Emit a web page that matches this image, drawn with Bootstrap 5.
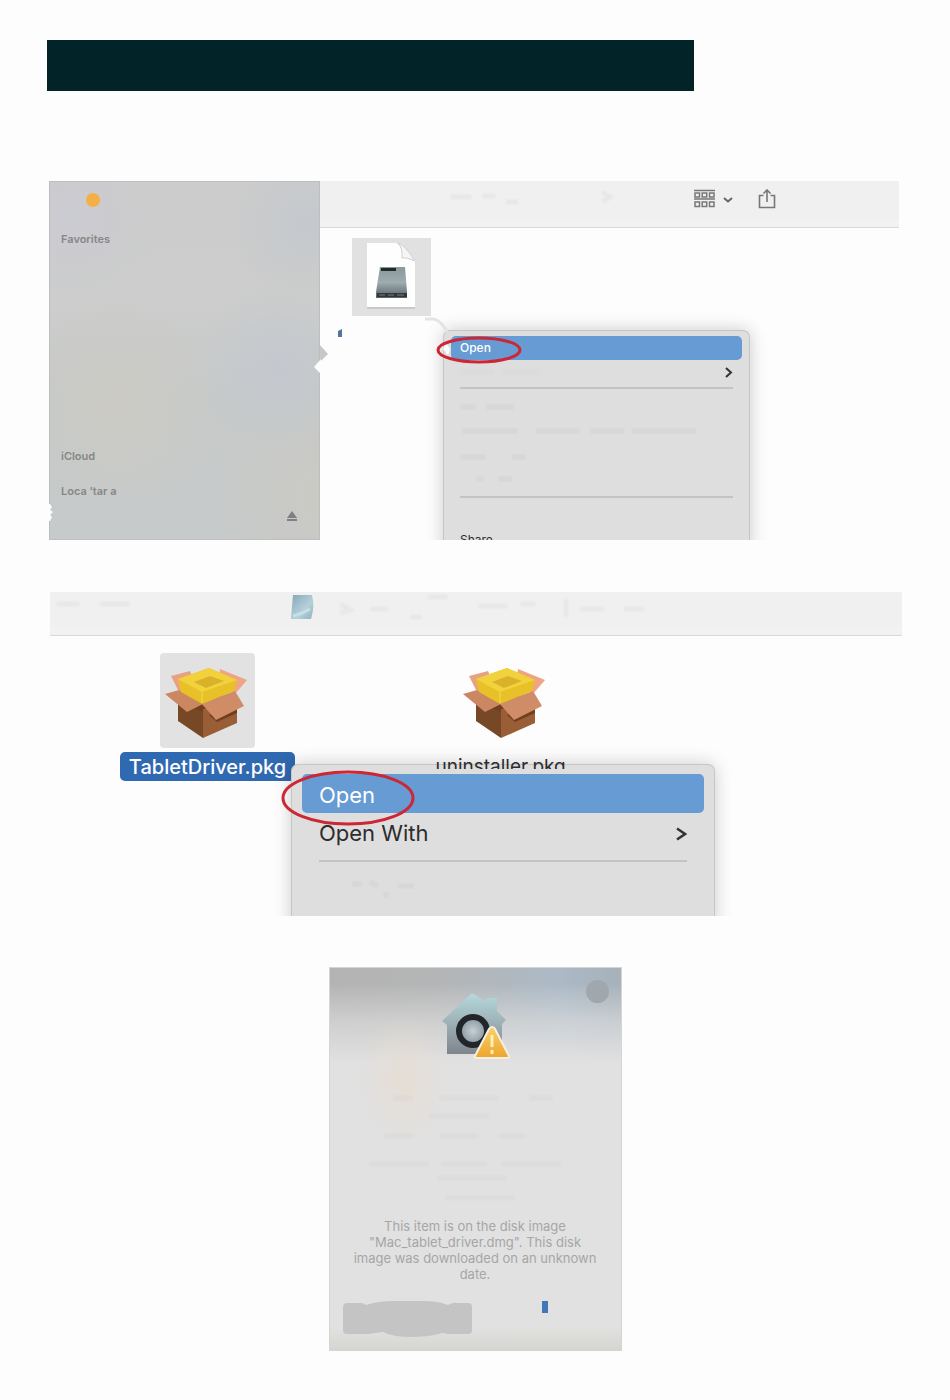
<!DOCTYPE html>
<html lang="en">
<head>
<meta charset="utf-8">
<meta name="viewport" content="width=device-width, initial-scale=1">
<title>Tablet driver installation on macOS</title>
<link href="https://cdn.jsdelivr.net/npm/bootstrap@5.3.0/dist/css/bootstrap.min.css" rel="stylesheet">
<style>
body{background:#fdfdfd;font-family:Inter,"Liberation Sans",sans-serif;color:#2c2c2c}
.page{padding:40px 47px 48px}
.banner{background:#022428;width:647px;max-width:100%;height:51px;margin-bottom:90px}
button{border:0;background:none;padding:0;color:inherit;text-align:left;display:block}
.win{position:relative;overflow:hidden}
/* finder window */
.finder{height:359px;margin:0 4px 52px 2px}
.side{width:271px;padding:11px;position:relative;font-size:11px;line-height:16px;color:#858787;border:1px solid #bdbfbf;
background:radial-gradient(circle at 25% 62%,#cccbc5 0,#cccbc500 34%),radial-gradient(circle at 85% 52%,#c4c8ce 0,#c4c8ce00 28%),radial-gradient(circle at 100% 88%,#cac9c4 0,#cac9c400 24%),radial-gradient(circle at 8% 10%,#cbcbd2 0,#cbcbd200 20%),radial-gradient(circle at 95% 12%,#c4c8cd 0,#c4c8cd00 18%),linear-gradient(#cccccc,#cccdcc 35%,#c6c9c8 60%,#c7caca)}
.side h2{font-size:11px;line-height:16px;font-weight:600;margin:0}
.dot{width:14px;height:14px;border-radius:50%;background:#f5b045;margin-left:25px}
.side .fav{height:217px;margin-top:24px}.side .cloud{height:35px}
.tear{position:absolute;z-index:2}
.bar{background:#f0f0f0;border-bottom:1px solid #d9d9d9;box-shadow:inset 0 -8px 0 #f2f2f2}
.finder .bar{height:47px;padding:8px 123px 0 0}
.ghost{stroke:#000;opacity:.03;fill:none;stroke-width:5;filter:blur(1px)}
.tile{background:#e1e1e1;width:79px;height:78px;margin:10px 0 0 32px}
.menu-pop{position:absolute;background:#dedede;border:1px solid #c6c6c6;border-bottom:0;border-radius:7px 7px 0 0;box-shadow:0 0 18px #0003}
.menu-pop hr{margin:0;border-top:2px solid #c3c3c3;opacity:1}
.menu1{left:394px;top:149px;width:307px;height:230px;padding:5px 7px;font-size:12px;line-height:24px}
.menu1 hr{margin:3px 9px 0}
.menu1 button,.menu2 button{width:100%}
.menu1 button{padding:0 9px;height:24px}
.on{background:#669bd3;color:#fff;border-radius:5px}
.on.thin{font-weight:500}
.void1{height:104px;padding:10px 9px}
.menu1 .share{padding-top:27px;height:56px}
.ring{fill:none;stroke:#cd2634}
/* package window */
.pack{height:324px;margin:0 1px 51px 3px}
.pack .bar{height:44px}
.pkgs{padding:17px 0 0 70px}
.pkgs figure{margin:0;width:175px;font-size:20px;line-height:29px}
.pkgs figure+figure{margin-left:117px;padding-left:46px;width:260px}
.pic{width:95px;height:95px;border-radius:4px}
.chosen{background:#2f69b1;color:#fff;border-radius:5px;margin-top:4px;text-align:center;font-weight:500;padding-top:1px;line-height:28px}
.halfname{position:absolute;left:380px;top:161px;height:16px;overflow:hidden;z-index:2;font-size:19px;line-height:27px}
.menu2{left:241px;top:172px;width:424px;height:170px;padding:9px 10px;font-size:22px;line-height:39px}
.menu2 button{padding:2px 17px 0;line-height:37px}
.menu2 .on{padding-top:3px;line-height:36px}
.menu2 hr{margin:8px 17px 0}
/* gatekeeper alert */
.alertbox{width:293px;height:384px;margin:0 auto;position:relative;padding:24px 13px 0;border:1px solid #d5d5d5;
background:radial-gradient(ellipse 45px 65px at 25% 29%,#e8dccf88 20%,#e8dccf00),linear-gradient(#e1e1e100 4%,#e1e1e199 14%,#e1e1e1 25%,#e1e1e1 94%,#d5d5d0 100%),linear-gradient(90deg,#b3b3b3,#b4b5b6 38%,#acbac6 78%,#a6b1ba)}
.closer{position:absolute;right:12px;top:12px;width:23px;height:23px;border-radius:50%;background:#a0a8ae}
.note{font-size:13px;line-height:16px;color:#a6a6a6;text-align:center;margin:0 0 18px;padding:0 10px}
.smears{height:158px}
</style>
</head>
<body>
<main class="page">
<header class="banner"></header>

<section class="win finder d-flex" aria-label="Finder">
  <aside class="side flex-shrink-0">
    <div class="dot"></div>
    <h2 class="fav">Favorites</h2>
    <h2 class="cloud">iCloud</h2>
    <h2>Loca ’tar a</h2>
    <svg class="tear" style="right:21px;bottom:17px" width="12" height="11" viewBox="0 0 12 11"><path d="M6 0 11 7H1zM1 8h10v2H1z" fill="#7d8080"/></svg>
  </aside>
  <svg class="tear" style="left:0;top:323px" width="5" height="18" viewBox="0 0 5 18"><path d="M0 0h1l2 3-2 3 3 2-3 3 2 2-2 4H0z" fill="#fdfdfd"/></svg>
  <svg class="tear" style="left:262px;top:164px" width="18" height="30" viewBox="0 0 18 30"><path d="M9 0 17 9 9 17z" fill="#c5c8c8"/><path d="M10 14 3 22l7 7z" fill="#fdfdfd"/></svg>
  <div class="flex-grow-1">
    <div class="bar d-flex justify-content-end align-items-start">
      <svg class="ghost me-auto" style="margin-left:130px" width="170" height="20"><path d="M0 8h22m10-1h14m10 6h12M152 3l8 5-8 5"/></svg>
      <button aria-label="Group by" class="me-4"><svg class="d-block" width="40" height="20" viewBox="0 0 40 20" fill="none" stroke="#777" stroke-width="1.500"><path d="M0 1.500h21M0 10h21"/><path d="M1 4h4.500v4H1zM8.200 4h4.500v4H8.200zM15.500 4H20v4h-4.500zM1 13h4.500v4.500H1zM8.200 13h4.500v4.500H8.200zM15.500 13H20v4.500h-4.500z"/><path d="m30 9 4 3.500L38 9" stroke="#666" stroke-width="2"/></svg></button>
      <button aria-label="Share file"><svg class="d-block" width="18" height="20" viewBox="0 0 18 20" fill="none" stroke="#777" stroke-width="1.600"><path d="M5.500 6.500H1.500v12h15v-12h-4M9 13V1.500M5.500 4.500 9 1l3.500 3.500"/></svg></button>
    </div>
    <div class="tile">
      <svg width="79" height="78" viewBox="0 0 79 78"><defs><linearGradient id="dsk" x2="0" y2="1"><stop stop-color="#8a979b"/><stop offset=".5" stop-color="#9eabaf"/><stop offset="1" stop-color="#596266"/></linearGradient></defs>
      <path d="M15 6h31l17 18v47H15z" fill="#c9c9c9"/><path d="M15 5h29q4 1 6 8 1 7 13 10v46H15z" fill="#fefefe"/><path d="M46 5q6 1 17 18-9-4-13-3 1-10-4-15z" fill="#f6f6f6" stroke="#d0d0d0"/>
      <path d="M28 29h25l2 25v6H24v-6z" fill="url(#dsk)"/><path d="M29 30h15v3H29z" fill="#22282b"/><path d="M25 55h30v4H25z" fill="#30373a"/><path d="M27 57h6m3 0h6m3 0h7" stroke="#717c80"/></svg>
    </div>
  </div>
  <svg class="tear" style="left:288px;top:146px" width="8" height="11" viewBox="0 0 8 11"><path d="M1 4 5 2v8H1z" fill="#58749a"/></svg>
  <nav class="menu-pop menu1">
    <button class="on thin">Open</button>
    <button class="d-flex align-items-center justify-content-between" aria-label="More"><svg class="ghost" width="90" height="12"><path d="M0 6h34m8 0h38" stroke="#b66"/></svg><svg width="9" height="11" viewBox="0 0 9 11" fill="none" stroke="#333" stroke-width="2"><path d="m2 1 5 4.500-5 4.500"/></svg></button>
    <hr>
    <div class="void1"><svg class="ghost" width="270" height="90"><path d="M0 8h16m10 0h28M2 32h56m18 0h44m10 0h34m8 0h64M0 58h26m26 0h14M16 80h8m14 0h14"/></svg></div>
    <hr>
    <button class="share">Share</button>
  </nav>
  <svg class="tear" style="left:376px;top:136px" width="32" height="40" viewBox="0 0 32 40"><path d="M0 2h8q8 1 14 13" fill="none" stroke="#e4e4e4" stroke-width="3"/><path d="M21 26 25 32l-2 6-5-6z" fill="#fff"/></svg>
  <svg class="ring tear" style="left:386px;top:154px" width="88" height="30"><ellipse cx="44" cy="15" rx="41" ry="12" stroke-width="3"/></svg>
</section>

<section class="win pack" aria-label="Tablet driver disk image">
  <div class="bar"><svg width="700" height="42" class="mw-100 d-block"><g class="ghost"><path d="M6 12h24m20 0h30M290 12l10 6-10 3M320 17h18m22 8h12m6-20h20m30 9h30m12-2h16m30-5v18m14-8h24m20 0h20"/></g><defs><linearGradient id="dm" x2="1" y2="1"><stop stop-color="#83a7b6"/><stop offset=".6" stop-color="#b6d0db"/><stop offset="1" stop-color="#8db2be"/></linearGradient></defs><path d="M243 3h19q3 11-1 24h-20q1-13 2-24z" fill="url(#dm)"/><path d="M243 24q9-2 17-7" stroke="#c5dfe7" stroke-width="3" fill="none"/></svg></div>
  <svg width="0" height="0" class="position-absolute"><defs><symbol id="box" viewBox="0 0 95 95">
    <path d="m18 48 24-8 35 6v10L43 66 18 56z" fill="#6e4020"/><path d="M18 48 43 59v26L18 68z" fill="#774826"/><path d="m43 56 34-8v22L43 85z" fill="#995e35"/>
    <path d="m49 62 8 7 20-9v-4z" fill="#6e4020"/>
    <path d="M11 23 30 18 42 46 18 37z" fill="#e8a184"/><path d="m60 16 27 11-12 14-17-9z" fill="#efa584"/>
    <path d="M19 37 5 41l22 18 16-8z" fill="#cb8762"/><path d="m41 50 15 17 28-14-9-15z" fill="#d08c66"/>
    <path d="m18 26 31-11 28 12-3 11-32 13-21-12z" fill="#e7c127"/><path d="m18 26 31-11 28 12-35 12z" fill="#f2d23c"/><path d="m34 29 16-6 14 5-18 7z" fill="#d9b22a"/><path d="M42 39v11" stroke="#f5da4c" fill="none"/>
  </symbol></defs></svg>
  <div class="pkgs d-flex">
    <figure>
      <div class="pic mx-auto" style="background:#e2e2e2"><svg class="d-block" width="95" height="95"><use href="#box"/></svg></div>
      <figcaption class="chosen">TabletDriver.pkg</figcaption>
    </figure>
    <figure><div class="pic"><svg class="d-block" width="95" height="95"><use href="#box"/></svg></div></figure>
  </div>
  <div class="halfname">.uninstaller.pkg</div>
  <nav class="menu-pop menu2">
    <button class="on">Open</button>
    <button class="d-flex align-items-center justify-content-between">Open With <svg width="12" height="14" viewBox="0 0 12 14" fill="none" stroke="#333" stroke-width="2.500"><path d="m2 1.500 8 5.500-8 5.500"/></svg></button>
    <hr>
    <svg class="ghost ms-4" width="120" height="50"><path d="M26 22h10m8-2 8 4m8 6v6m12-12h16"/></svg>
  </nav>
  <svg class="ring tear" style="left:230px;top:177px" width="136" height="58"><ellipse cx="68" cy="29" rx="65" ry="26" stroke-width="3"/></svg>
</section>

<section class="alertbox" aria-label="Security notice">
  <button class="closer" aria-label="Help"></button>
  <svg class="d-block mx-auto" width="70" height="68" viewBox="0 0 70 68"><defs><linearGradient id="hs" x2="0" y2="1"><stop stop-color="#b5dadb"/><stop offset=".45" stop-color="#9fb4ba"/><stop offset="1" stop-color="#7e858b"/></linearGradient><linearGradient id="wr" x2="0" y2="1"><stop stop-color="#f7d268"/><stop offset="1" stop-color="#eda42e"/></linearGradient><radialGradient id="ln"><stop stop-color="#c5d0d5"/><stop offset="1" stop-color="#87939b"/></radialGradient></defs>
    <path d="M32 1 47 10V6h10v13l9 9-4 4v30H7V33l-5-4z" fill="url(#hs)"/><circle cx="33" cy="39" r="14" fill="url(#ln)" stroke="#22262a" stroke-width="6"/>
    <path d="M52 35q2 0 3 2l14 27q1 2-2 2H37q-3 0-2-2l14-27q1-2 3-2z" fill="url(#wr)" stroke="#f5efe1" stroke-width="2"/><path d="M52 43v12m0 3v4" stroke="#fdf0b5" stroke-width="3"/></svg>
  <div class="smears"><svg class="ghost" width="260" height="140" style="opacity:.02"><path d="M50 38h20m26 0h60m30 0h24M86 56h60M40 76h30m26 0h40m20 0h26M26 104h60m12 0h46m14 0h60M94 118h70M102 138h70"/></svg></div>
  <p class="note">This item is on the disk image "Mac_tablet_driver.dmg". This disk image was downloaded on an unknown date.</p>
  <div class="d-flex">
    <button aria-label="Cancel"><svg class="d-block" width="130" height="37" viewBox="0 0 130 37"><path d="M4 3h14q3 0 5 2 12-4 28-4h30q14 0 24 4 5-3 10-2h10q4 0 4 4v24q0 3-4 3H104q-5-2-8 0-12 3-28 3-18 0-28-5-8 1-14 2H4q-4 0-4-4V8q0-5 4-5z" fill="#c4c4c4"/></svg></button>
    <button aria-label="Open image" style="margin-left:69px;height:14px"><svg class="d-block" width="6" height="14"><path d="M0 1h6v12H0z" fill="#4079b5"/></svg></button>
  </div>
</section>
</main>
<script src="https://cdn.jsdelivr.net/npm/bootstrap@5.3.0/dist/js/bootstrap.bundle.min.js"></script>
</body>
</html>
